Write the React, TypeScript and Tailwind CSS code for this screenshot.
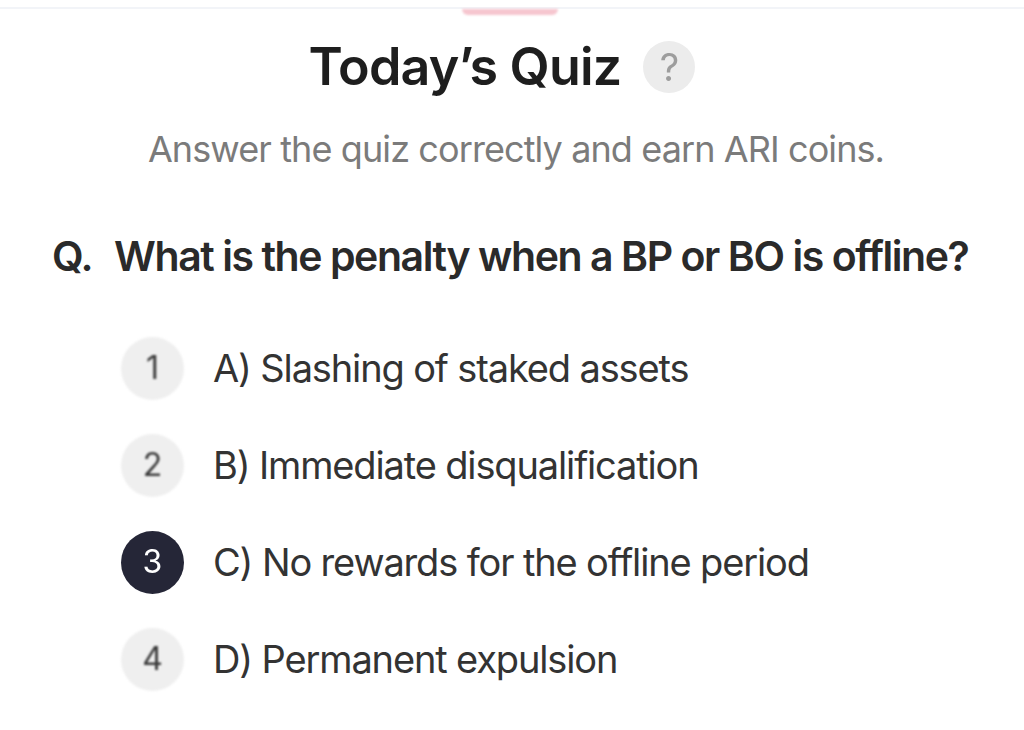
import React from "react";

const options = [
  { n: 1, text: "A) Slashing of staked assets" },
  { n: 2, text: "B) Immediate disqualification" },
  { n: 3, text: "C) No rewards for the offline period" },
  { n: 4, text: "D) Permanent expulsion" },
];

export default function App() {
  const selected = 3;

  return (
    <div
      className="w-full min-h-screen bg-white text-[#222]"
      style={{ fontFamily: "Inter, 'Noto Sans', sans-serif" }}
    >
      {/* top divider with pink tab */}
      <div className="relative pt-[7px]">
        <div className="h-[2px] bg-[#f2f4f8]" />
        <div className="absolute left-[462px] top-[9px] w-[96px] h-[6px] rounded-b-full bg-[#f6c6cf] blur-[1px]" />
      </div>

      <div className="flex items-center justify-center gap-[22px] mt-[28px] pr-[20px]">
        <h1 className="text-[52px] leading-[60px] font-semibold tracking-[-0.015em] text-[#1e1e1e]">
          Today’s Quiz
        </h1>
        <div className="w-[52px] h-[52px] rounded-full bg-[#ececec] flex items-center justify-center text-[38px] font-normal text-[#9d9d9d] blur-[0.6px]">
          ?
        </div>
      </div>

      <p className="mt-[30px] pl-[8px] text-center text-[36px] leading-[44px] tracking-[-0.025em] text-[#7b7b7b]">
        Answer the quiz correctly and earn ARI coins.
      </p>

      <div className="mt-[60px] pl-[52px] flex items-baseline gap-[22px] text-[41px] leading-[50px] font-semibold tracking-[-0.035em] text-[#2a2a2a]">
        <span>Q.</span>
        <span>What is the penalty when a BP or BO is offline?</span>
      </div>

      <ul className="mt-[57px] pl-[121px] flex flex-col gap-[37px]">
        {options.map((o) => (
          <li key={o.n} className="flex items-center gap-[29px] h-[60px]">
            <div
              className={
                o.n === selected
                  ? "w-[63px] h-[63px] rounded-full bg-[#252637] text-white flex items-center justify-center text-[32px] font-normal blur-[0.5px]"
                  : "w-[63px] h-[63px] rounded-full bg-[#efefef] text-[#3a3a3a] flex items-center justify-center text-[32px] font-normal blur-[1px]"
              }
            >
              {o.n}
            </div>
            <span className="text-[38px] leading-[46px] tracking-[-0.03em] text-[#333]">
              {o.text}
            </span>
          </li>
        ))}
      </ul>
    </div>
  );
}
